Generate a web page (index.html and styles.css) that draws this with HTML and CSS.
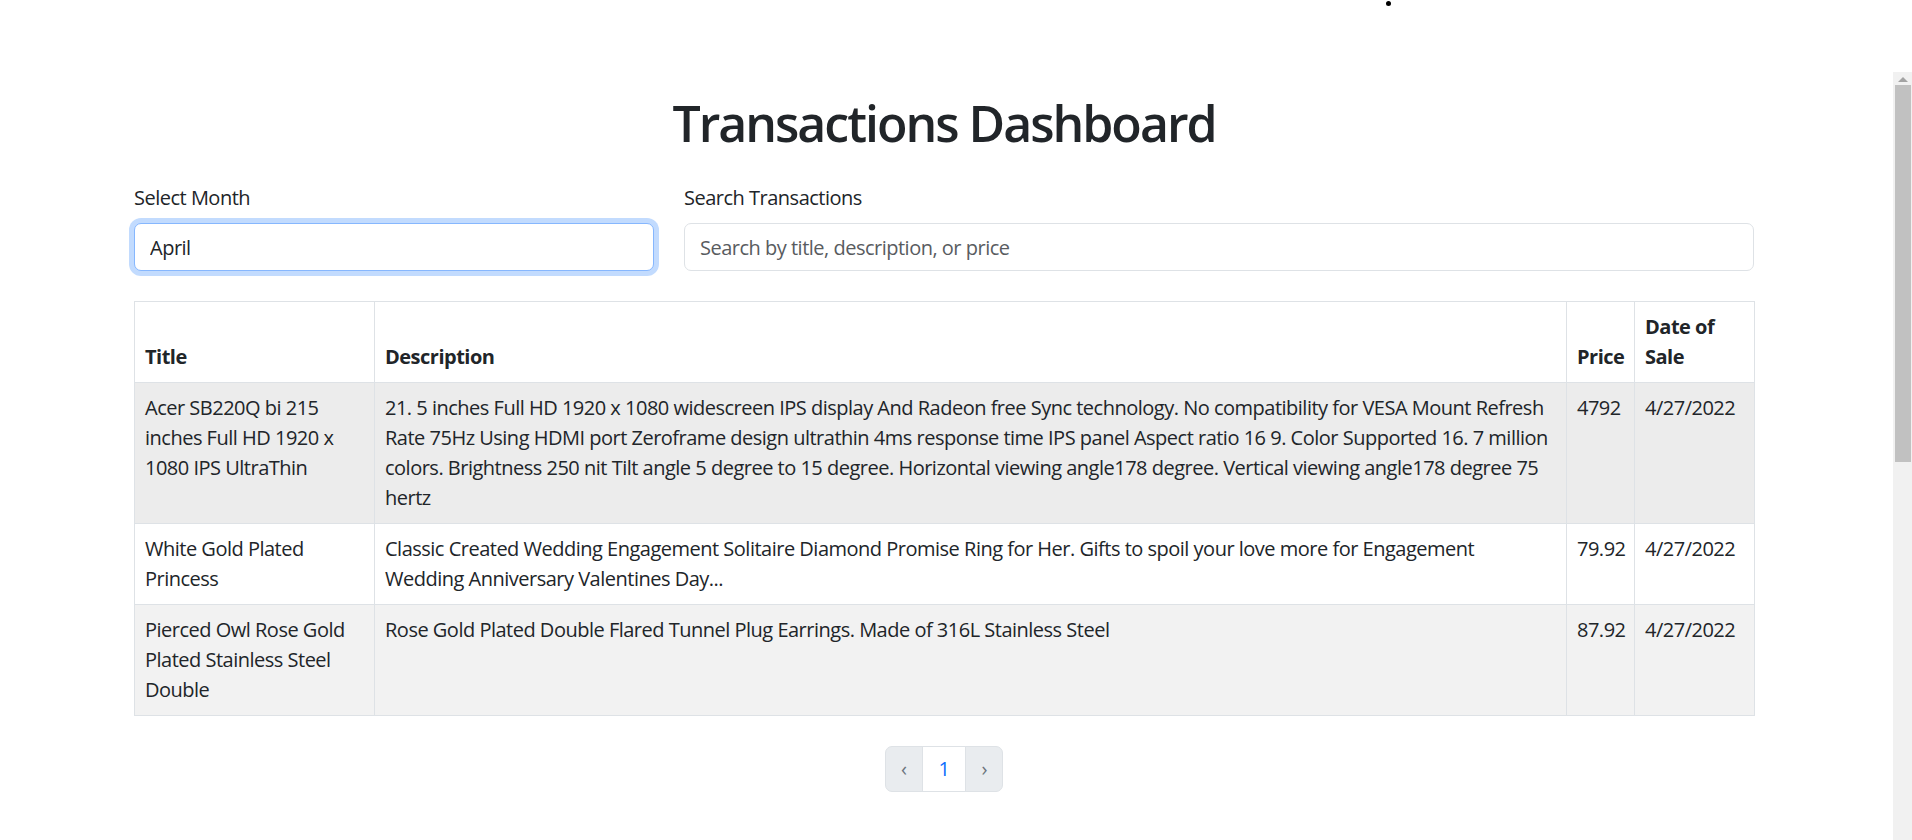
FILE: index.html
```html
<!DOCTYPE html>
<html lang="en">
<head>
<meta charset="utf-8">
<title>Transactions Dashboard</title>
<link rel="stylesheet" href="styles.css">
</head>
<body>
<div class="topbar"><span class="dot"></span></div>
<div class="viewport">
  <main class="page">
    <div class="container">
      <h1 class="title">Transactions Dashboard</h1>
      <div class="filters">
        <div class="field">
          <label class="field-label" for="month">Select Month</label>
          <input id="month" class="control control-focus" type="text" value="April">
        </div>
        <div class="field">
          <label class="field-label" for="search">Search Transactions</label>
          <input id="search" class="control" type="text" placeholder="Search by title, description, or price">
        </div>
      </div>
      <table class="tx-table">
        <colgroup>
          <col class="col-title"><col class="col-desc"><col class="col-price"><col class="col-date">
        </colgroup>
        <thead>
          <tr><th>Title</th><th>Description</th><th>Price</th><th>Date of Sale</th></tr>
        </thead>
        <tbody>
          <tr class="row-hover">
            <td>Acer SB220Q bi 215 inches Full HD 1920 x 1080 IPS UltraThin</td>
            <td>21. 5 inches Full HD 1920 x 1080 widescreen IPS display And Radeon free Sync technology. No compatibility for VESA Mount Refresh Rate 75Hz Using HDMI port Zeroframe design ultrathin 4ms response time IPS panel Aspect ratio 16 9. Color Supported 16. 7 million colors. Brightness 250 nit Tilt angle 5 degree to 15 degree. Horizontal viewing angle178 degree. Vertical viewing angle178 degree 75 hertz</td>
            <td>4792</td>
            <td>4/27/2022</td>
          </tr>
          <tr>
            <td>White Gold Plated Princess</td>
            <td>Classic Created Wedding Engagement Solitaire Diamond Promise Ring for Her. Gifts to spoil your love more for Engagement Wedding Anniversary Valentines Day...</td>
            <td>79.92</td>
            <td>4/27/2022</td>
          </tr>
          <tr class="row-striped">
            <td>Pierced Owl Rose Gold Plated Stainless Steel Double</td>
            <td>Rose Gold Plated Double Flared Tunnel Plug Earrings. Made of 316L Stainless Steel</td>
            <td>87.92</td>
            <td>4/27/2022</td>
          </tr>
        </tbody>
      </table>
      <nav class="pager">
        <span class="page-link disabled">&lsaquo;</span>
        <span class="page-link current">1</span>
        <span class="page-link disabled">&rsaquo;</span>
      </nav>
    </div>
  </main>
  <div class="scrollbar">
    <div class="scroll-arrow"></div>
    <div class="scroll-thumb"></div>
  </div>
</div>
</body>
</html>
```
FILE: styles.css
```css
* { box-sizing: border-box; }

html, body {
  margin: 0;
  padding: 0;
  background: #fff;
}

body {
  font-family: "Open Sans", "Noto Sans", sans-serif;
  font-size: 20px;
  line-height: 30px;
  letter-spacing: -0.5px;
  color: #212529;
  overflow: hidden;
}

.topbar {
  height: 72px;
  position: relative;
}

.dot {
  position: absolute;
  left: 1386px;
  top: 1px;
  width: 5px;
  height: 5px;
  border-radius: 50%;
  background: #000;
}

.viewport {
  display: flex;
  height: 768px;
}

.page {
  flex: 1;
  overflow: hidden;
}

.container {
  width: 1620px;
  margin-left: 134px;
  padding-top: 21px;
}

.title {
  margin: 0 0 30px;
  font-size: 50px;
  font-weight: 600;
  line-height: 60px;
  letter-spacing: -2px;
  text-align: center;
}

.filters {
  display: grid;
  grid-template-columns: 520px 1070px;
  column-gap: 30px;
  margin-bottom: 30px;
}

.field-label {
  display: block;
  margin-bottom: 10px;
}

.control {
  display: block;
  width: 100%;
  height: 48px;
  padding: 7px 15px;
  font: inherit;
  letter-spacing: inherit;
  color: #212529;
  background: #fff;
  border: 1px solid #dee2e6;
  border-radius: 7px;
  outline: none;
}

.control::placeholder {
  color: #595c5f;
  opacity: 1;
}

.control-focus {
  border-color: #86b7fe;
  box-shadow: 0 0 0 5px rgba(13, 110, 253, 0.25);
}

.tx-table {
  width: 1620px;
  table-layout: fixed;
  border-collapse: collapse;
  border: 1px solid #dee2e6;
}

.col-title { width: 240px; }
.col-desc { width: 1192px; }
.col-price { width: 68px; }
.col-date { width: 120px; }

.tx-table th,
.tx-table td {
  padding: 10px;
  border: 1px solid #dee2e6;
  text-align: left;
}

.tx-table th {
  font-weight: 700;
  vertical-align: bottom;
}

.tx-table td {
  vertical-align: top;
}

.row-hover td { background: #ececec; }
.row-striped td { background: #f2f2f2; }

.pager {
  display: flex;
  justify-content: center;
  margin-top: 30px;
}

.page-link {
  display: block;
  padding: 7px 15px;
  line-height: 30px;
  border: 1px solid #dee2e6;
  margin-left: -1px;
  background: #fff;
}

.page-link:first-child {
  margin-left: 0;
  border-radius: 7px 0 0 7px;
}

.page-link:last-child {
  border-radius: 0 7px 7px 0;
}

.page-link.disabled {
  background: #e9ecef;
  color: #6c757d;
}

.page-link.current {
  color: #0d6efd;
  padding: 7px 16px;
}

.scrollbar {
  width: 19px;
  background: #f1f1f1;
  display: flex;
  flex-direction: column;
  align-items: center;
}

.scroll-arrow {
  margin-top: 5px;
  width: 0;
  height: 0;
  border-left: 5px solid transparent;
  border-right: 5px solid transparent;
  border-bottom: 5px solid #a3a3a3;
}

.scroll-thumb {
  margin-top: 3px;
  width: 16px;
  height: 377px;
  background: #c1c1c1;
}
```
